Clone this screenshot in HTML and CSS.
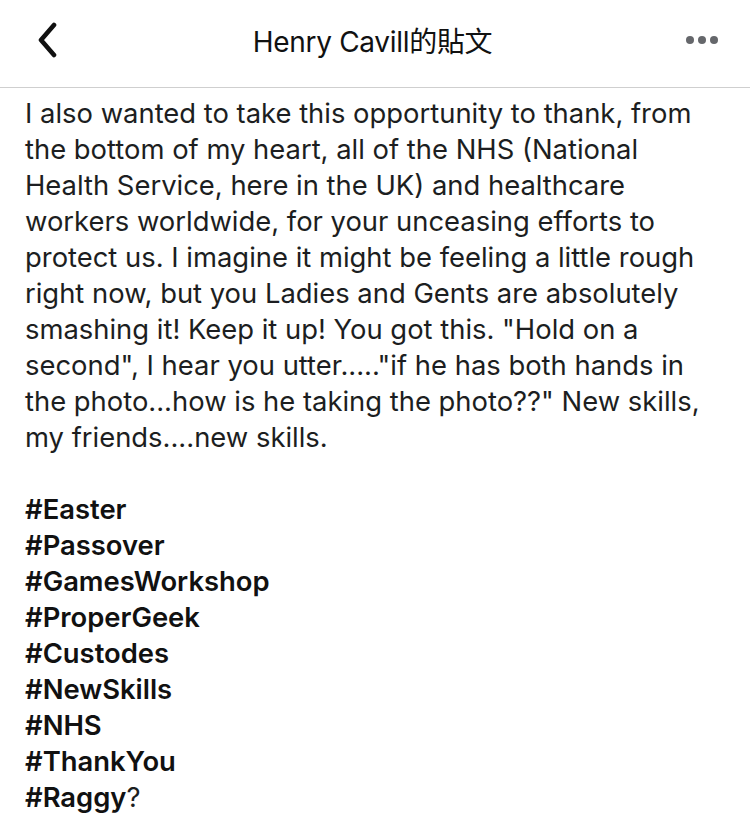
FILE: index.html
```html
<!DOCTYPE html>
<html>
<head>
<meta charset="utf-8">
<link rel="stylesheet" href="styles.css">
</head>
<body>
<header class="bar">
  <div class="back">
    <svg width="24" height="36" viewBox="0 0 24 36"><path d="M19 3 L6 18 L19 33" fill="none" stroke="#111" stroke-width="4.6" stroke-linecap="round" stroke-linejoin="round"/></svg>
  </div>
  <div class="title">Henry Cavill的貼文</div>
  <div class="more"><span></span><span></span><span></span></div>
</header>
<main class="post">
  <p class="body">I also wanted to take this opportunity to thank, from<br>the bottom of my heart, all of the NHS (National<br>Health Service, here in the UK) and healthcare<br>workers worldwide, for your unceasing efforts to<br>protect us. I imagine it might be feeling a little rough<br>right now, but you Ladies and Gents are absolutely<br>smashing it! Keep it up! You got this. "Hold on a<br>second", I hear you utter....."if he has both hands in<br>the photo...how is he taking the photo??" New skills,<br>my friends....new skills.</p>
  <p class="tags"><b>#Easter</b><br><b>#Passover</b><br><b>#GamesWorkshop</b><br><b>#ProperGeek</b><br><b>#Custodes</b><br><b>#NewSkills</b><br><b>#NHS</b><br><b>#ThankYou</b><br><b>#Raggy</b>?</p>
</main>
</body>
</html>
```
FILE: styles.css
```css
html, body { margin: 0; padding: 0; background: #fff; }
body { font-family: Inter, "Noto Sans CJK TC", sans-serif; color: #1c1e21; width: 750px; height: 827px; overflow: hidden; }
.bar { height: 88px; box-sizing: border-box; border-bottom: 1px solid #cfcfcf; display: flex; align-items: center; justify-content: space-between; padding: 0 32px 8px 35px; }
.back { width: 24px; height: 36px; display: flex; }
.title { font-size: 28px; color: #111; letter-spacing: -0.3px; }
.more { display: flex; gap: 4px; }
.more span { width: 8px; height: 8px; border-radius: 50%; background: #65676b; }
.post { padding: 7px 25px 0 25px; }
.body, .tags { margin: 0; font-size: 27.4px; line-height: 36px; white-space: nowrap; }
.tags { margin-top: 36px; }
.tags b { font-weight: 600; color: #111; }
```
